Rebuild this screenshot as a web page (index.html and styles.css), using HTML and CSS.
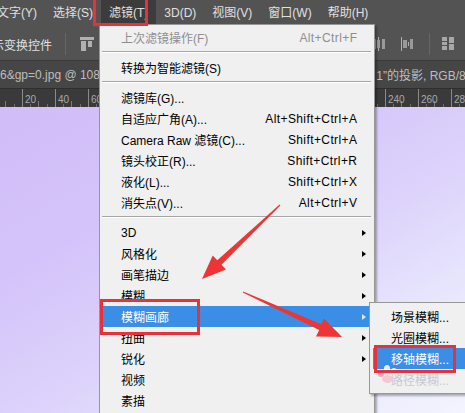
FILE: index.html
```html
<!DOCTYPE html>
<html lang="zh">
<head>
<meta charset="utf-8">
<title>滤镜菜单</title>
<link rel="stylesheet" href="styles.css">
</head>
<body>
<div class="app">
  <div class="menubar">
    <span class="mi first">文字(Y)</span>
    <span class="mi">选择(S)</span>
    <span class="mi active">滤镜(T)</span>
    <span class="mi">3D(D)</span>
    <span class="mi">视图(V)</span>
    <span class="mi">窗口(W)</span>
    <span class="mi">帮助(H)</span>
  </div>

  <div class="optbar">
    <div class="opt-left">
      <span class="opt-text">示变换控件</span>
      <span class="vsep"></span>
      <svg class="ico" width="14" height="14" viewBox="0 0 14 14"><rect x="0" y="0" width="14" height="3" fill="#b0b0b0"/><rect x="1" y="4" width="5" height="10" fill="#b0b0b0"/><rect x="8" y="4" width="4" height="6" fill="#b0b0b0"/></svg>
    </div>
    <div class="opt-right">
      <svg class="ico" width="14" height="14" viewBox="0 0 14 14"><rect x="0" y="2" width="4" height="10" fill="#9a9a9a"/><rect x="6" y="0" width="1" height="14" fill="#b0b0b0"/><rect x="5" y="3" width="3" height="8" fill="#9a9a9a"/><rect x="10" y="2" width="3" height="10" fill="#9a9a9a"/></svg>
      <svg class="ico" width="13" height="14" viewBox="0 0 13 14"><rect x="0" y="0" width="1" height="14" fill="#b0b0b0"/><rect x="2" y="3" width="4" height="8" fill="#9a9a9a"/><rect x="7" y="5" width="1" height="4" fill="#b0b0b0"/><rect x="9" y="2" width="3" height="10" fill="#9a9a9a"/></svg>
      <span class="vsep"></span>
      <svg class="ico" width="12" height="13" viewBox="0 0 12 13"><rect x="0" y="0" width="5" height="4" fill="#a8a8a8"/><rect x="0" y="5" width="5" height="3" fill="#a8a8a8"/><rect x="0" y="9" width="5" height="4" fill="#a8a8a8"/><rect x="7" y="0" width="5" height="6" fill="#a8a8a8"/><rect x="7" y="7" width="5" height="6" fill="#a8a8a8"/></svg>
    </div>
  </div>

  <div class="tabbar">
    <span class="tab-left">6&amp;gp=0.jpg @ 108%</span>
    <span class="tab-right">图 1”的投影, RGB/8) *</span>
  </div>

  <div class="ruler">
    <div class="ruler-scale">
      <span class="tick"></span><span class="tick">20</span><span class="tick">40</span><span class="tick">60</span><span class="tick"></span><span class="tick"></span><span class="tick"></span><span class="tick"></span><span class="tick"></span><span class="tick"></span><span class="tick"></span><span class="tick"></span><span class="tick">240</span><span class="tick">260</span><span class="tick">280</span>
    </div>
  </div>

  <div class="canvas"></div>

  <div class="menu">
    <div class="row disabled"><span class="lbl">上次滤镜操作(F)</span><span class="sc">Alt+Ctrl+F</span></div>
    <div class="sep"></div>
    <div class="row"><span class="lbl">转换为智能滤镜(S)</span></div>
    <div class="sep"></div>
    <div class="row"><span class="lbl">滤镜库(G)...</span></div>
    <div class="row"><span class="lbl">自适应广角(A)...</span><span class="sc">Alt+Shift+Ctrl+A</span></div>
    <div class="row"><span class="lbl">Camera Raw 滤镜(C)...</span><span class="sc">Shift+Ctrl+A</span></div>
    <div class="row"><span class="lbl">镜头校正(R)...</span><span class="sc">Shift+Ctrl+R</span></div>
    <div class="row"><span class="lbl">液化(L)...</span><span class="sc">Shift+Ctrl+X</span></div>
    <div class="row"><span class="lbl">消失点(V)...</span><span class="sc">Alt+Ctrl+V</span></div>
    <div class="sep"></div>
    <div class="row"><span class="lbl">3D</span><span class="ar"></span></div>
    <div class="row"><span class="lbl">风格化</span><span class="ar"></span></div>
    <div class="row"><span class="lbl">画笔描边</span><span class="ar"></span></div>
    <div class="row"><span class="lbl">模糊</span><span class="ar"></span></div>
    <div class="row hl"><span class="lbl">模糊画廊</span><span class="ar"></span></div>
    <div class="row"><span class="lbl">扭曲</span><span class="ar"></span></div>
    <div class="row"><span class="lbl">锐化</span><span class="ar"></span></div>
    <div class="row"><span class="lbl">视频</span></div>
    <div class="row"><span class="lbl">素描</span></div>
  </div>

  <div class="submenu">
    <div class="row"><span class="lbl">场景模糊...</span></div>
    <div class="row"><span class="lbl">光圈模糊...</span></div>
    <div class="row hl"><span class="lbl">移轴模糊...</span></div>
    <div class="row faded"><span class="lbl">路径模糊...</span></div>
  </div>

  <div class="paw">
    <span class="toe t1"></span><span class="toe t2"></span><span class="toe t3"></span><span class="pad"></span>
  </div>

  <div class="mark mark1"></div>
  <div class="mark mark2"></div>
  <div class="mark mark3"></div>

  <svg class="arrows" width="465" height="413" viewBox="0 0 465 413">
    <polygon fill="#ee3535" points="280.4,205.4 221.5,264.7 226,269.5 202,279 212.7,255.5 217.3,260.3 279.6,204.6"/>
    <polygon fill="#ee3535" points="242.8,292.6 319.2,330 316,336.5 342,337 324,318.5 321.4,324.2 243.2,291.4"/>
  </svg>
</div>
</body>
</html>
```

FILE: styles.css
```css
* { box-sizing: border-box; }

body {
  margin: 0;
  background: #535353;
  font-family: "Liberation Sans", "Noto Sans CJK SC", sans-serif;
  font-size: 12px;
}

.app {
  position: relative;
  width: 465px;
  height: 413px;
  overflow: hidden;
  display: flex;
  flex-direction: column;
}

/* ---------- menubar ---------- */
.menubar {
  flex: none;
  height: 25px;
  display: flex;
  background: #535353;
  color: #e0e0e0;
  white-space: nowrap;
}
.mi {
  height: 25px;
  padding: 2px 8px 0;
  line-height: 23px;
}
.mi.first { margin-left: -11px; }
.mi.active { background: #3c3c3c; }

/* ---------- options bar ---------- */
.optbar {
  flex: none;
  height: 36px;
  display: flex;
  align-items: center;
  background: #535353;
  border-bottom: 1px solid #3a3a3a;
  color: #e0e0e0;
  white-space: nowrap;
}
.opt-left {
  flex: 0 0 372px;
  display: flex;
  align-items: center;
  padding-top: 3px;
}
.opt-text { margin-left: -8px; font-size: 12px; }
.vsep {
  width: 1px;
  height: 22px;
  background: #3f3f3f;
  border-right: 1px solid #666;
}
.opt-left .vsep { margin: 0 14px 0 13px; }
.opt-right {
  display: flex;
  align-items: center;
  gap: 15px;
  padding-top: 2px;
}
.opt-right .vsep { margin: 0 -3px 0 0; }
.ico { display: block; flex: none; }

/* ---------- document tab ---------- */
.tabbar {
  flex: none;
  height: 27px;
  display: grid;
  grid-template-columns: 99px 262px 1fr;
  align-items: center;
  background: #464646;
  color: #bdbdbd;
  white-space: nowrap;
  overflow: hidden;
}
.tab-left { grid-column: 1; overflow: hidden; }
.tab-right { grid-column: 3; overflow: hidden; }

/* ---------- ruler ---------- */
.ruler {
  flex: none;
  height: 19px;
  background: #3a3a3a;
  border-top: 1px solid #2e2e2e;
  overflow: hidden;
}
.ruler-scale {
  display: flex;
  height: 100%;
  margin-left: -11px;
}
.tick {
  flex: 0 0 33px;
  height: 100%;
  padding: 4px 0 0 3px;
  font-size: 10px;
  line-height: 14px;
  color: #a9a9a9;
  background:
    linear-gradient(#8a8a8a, #8a8a8a) 0 0 / 1px 100% no-repeat,
    linear-gradient(#7a7a7a, #7a7a7a) 16px 100% / 1px 6px no-repeat,
    linear-gradient(#6e6e6e, #6e6e6e) 8px 100% / 1px 3px no-repeat,
    linear-gradient(#6e6e6e, #6e6e6e) 25px 100% / 1px 3px no-repeat;
}

/* ---------- canvas ---------- */
.canvas {
  flex: 1;
  background: linear-gradient(150deg, #d1bdf8 0%, #d4c3fa 30%, #dcd2fb 55%, #e9e8fd 80%, #f3f4fe 100%);
}

/* ---------- menus ---------- */
.menu, .submenu {
  position: absolute;
  background: #f0f0f0;
  border: 1px solid #979797;
  box-shadow: 2px 2px 2px rgba(0, 0, 0, 0.3);
  color: #000;
  white-space: nowrap;
}
.menu {
  left: 99px;
  top: 24px;
  width: 276px;
  height: 420px;
  padding: 2px 0;
}
.submenu {
  left: 369px;
  top: 302px;
  width: 120px;
  padding: 3px 0;
}
.row {
  height: 21px;
  margin: 0 2px 0 3px;
  padding: 0 6px 0 18px;
  display: grid;
  grid-template-columns: 1fr auto 9px;
  align-items: center;
}
.row .lbl { grid-column: 1; }
.row .sc { grid-column: 2; letter-spacing: 0.4px; margin-right: -0.4px; }
.row .ar {
  grid-column: 3;
  justify-self: end;
  width: 0;
  height: 0;
  border-left: 4px solid #000;
  border-top: 3.5px solid transparent;
  border-bottom: 3.5px solid transparent;
}
.row.disabled { color: #8e8e8e; }
.row.hl { background: #3a8ee6; color: #fff; }
.row.hl .ar { border-left-color: #d8e8fb; }
.row.faded { color: #c9c9d4; }
.sep {
  height: 2px;
  margin: 3px 3px 4px 2px;
  border-top: 1px solid #a6a6a6;
  border-bottom: 1px solid #ffffff;
}

/* ---------- watermark ---------- */
.paw {
  position: absolute;
  left: 378px;
  top: 364px;
  width: 20px;
  height: 20px;
}
.toe, .pad {
  position: absolute;
  border-radius: 50%;
  background: rgba(255, 255, 255, 0.85);
}
.t1 { left: 0; top: 6px; width: 6px; height: 7px; background: rgba(240, 150, 170, 0.85); }
.t2 { left: 6px; top: 1px; width: 6px; height: 7px; }
.t3 { left: 13px; top: 4px; width: 6px; height: 7px; }
.pad { left: 4px; top: 11px; width: 11px; height: 8px; background: rgba(245, 190, 205, 0.8); }

/* ---------- annotations ---------- */
.mark {
  position: absolute;
  border: 3px solid #e5333b;
}
.mark1 { left: 93px; top: -4px; width: 55px; height: 30px; }
.mark2 { left: 100px; top: 299px; width: 100px; height: 36px; }
.mark3 { left: 374px; top: 345px; width: 82px; height: 28px; }

.arrows {
  position: absolute;
  left: 0;
  top: 0;
  pointer-events: none;
}
```
